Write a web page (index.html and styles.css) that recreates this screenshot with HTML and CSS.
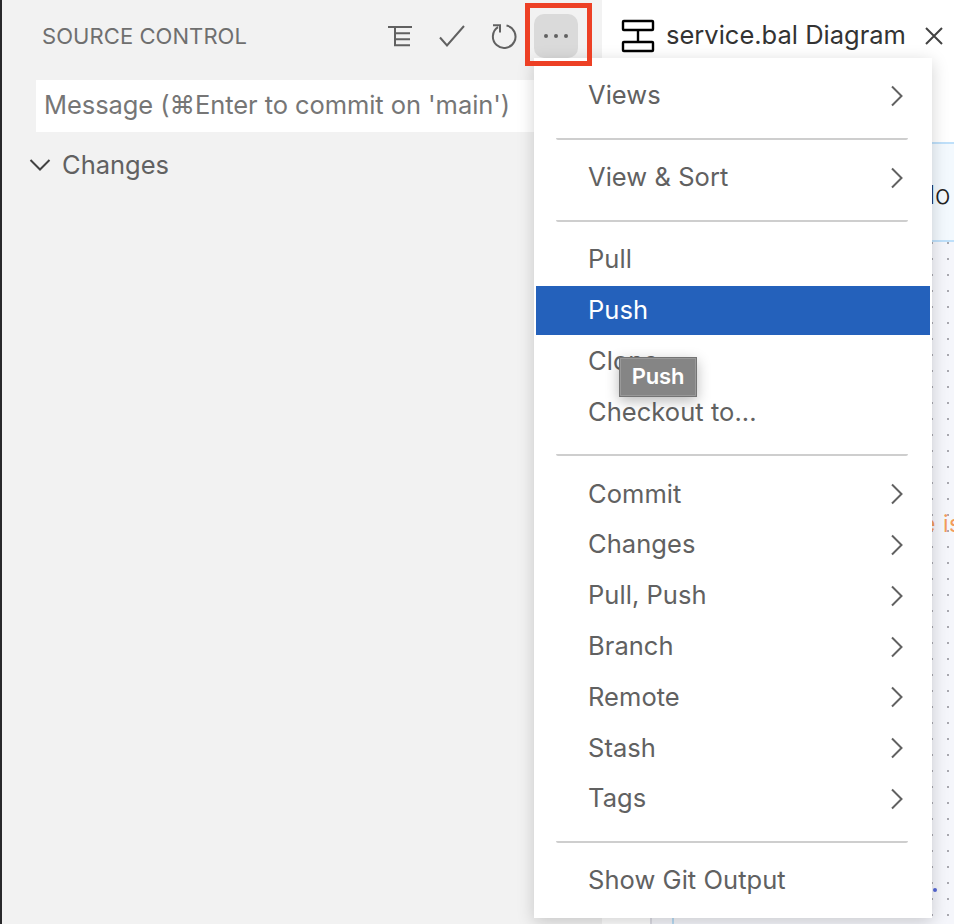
FILE: index.html
```html
<!DOCTYPE html>
<html lang="en">
<head>
<meta charset="utf-8">
<title>Source Control</title>
<link rel="stylesheet" href="styles.css">
</head>
<body>
<div class="window">
  <aside class="sidebar">
    <header class="side-head">
      <h1 class="side-title">SOURCE CONTROL</h1>
      <div class="actions">
        <svg class="act-tree" width="26" height="24" viewBox="0 0 26 24"><path d="M0 3H24M7 3V21.2H22M7 9.2H22M7 15.2H22"/></svg>
        <svg class="act-check" width="26" height="24" viewBox="0 0 26 24"><path d="M1 13.5L8 21.5L25 2"/></svg>
        <svg class="act-refresh" width="28" height="26" viewBox="0 0 28 26"><path d="M16.5 2.6A11.3 11.3 0 1 1 8 4.2M3 2.2H10V9.5"/></svg>
        <button class="more"><i></i><i></i><i></i></button>
      </div>
    </header>
    <div class="message">Message (⌘Enter to commit on 'main')</div>
    <div class="changes"><svg width="22" height="14" viewBox="0 0 22 14"><path d="M1.5 2L11 11.5L20.5 2"/></svg><span>Changes</span></div>
  </aside>
  <main class="editor">
    <div class="tab">
      <svg class="tab-icon" width="34" height="34" viewBox="0 0 34 34"><rect x="2" y="2" width="30" height="9" rx=".8"/><rect x="2" y="23" width="30" height="9" rx=".8"/><path d="M17 11V23"/></svg>
      <span class="tab-name">service.bal Diagram</span>
      <svg class="close" width="18" height="18" viewBox="0 0 18 18"><path d="M1 1L17 17M17 1L1 17"/></svg>
    </div>
    <div class="diagram">
      <div class="canvas">
        <div class="node">lo</div>
        <span class="note">e is</span>
        <span class="period"></span>
      </div>
    </div>
  </main>
</div>
<div class="highlight"></div>
<nav class="menu">
  <div class="item"><span>Views</span><svg class="chev" viewBox="0 0 14 22"><path d="M2 1.5L11.5 11L2 20.5"/></svg></div>
  <hr>
  <div class="item"><span>View &amp; Sort</span><svg class="chev" viewBox="0 0 14 22"><path d="M2 1.5L11.5 11L2 20.5"/></svg></div>
  <hr>
  <div class="item"><span>Pull</span></div>
  <div class="item active"><span>Push</span></div>
  <div class="item"><span>Clone</span></div>
  <div class="item"><span>Checkout to...</span></div>
  <hr>
  <div class="item"><span>Commit</span><svg class="chev" viewBox="0 0 14 22"><path d="M2 1.5L11.5 11L2 20.5"/></svg></div>
  <div class="item"><span>Changes</span><svg class="chev" viewBox="0 0 14 22"><path d="M2 1.5L11.5 11L2 20.5"/></svg></div>
  <div class="item"><span>Pull, Push</span><svg class="chev" viewBox="0 0 14 22"><path d="M2 1.5L11.5 11L2 20.5"/></svg></div>
  <div class="item"><span>Branch</span><svg class="chev" viewBox="0 0 14 22"><path d="M2 1.5L11.5 11L2 20.5"/></svg></div>
  <div class="item"><span>Remote</span><svg class="chev" viewBox="0 0 14 22"><path d="M2 1.5L11.5 11L2 20.5"/></svg></div>
  <div class="item"><span>Stash</span><svg class="chev" viewBox="0 0 14 22"><path d="M2 1.5L11.5 11L2 20.5"/></svg></div>
  <div class="item"><span>Tags</span><svg class="chev" viewBox="0 0 14 22"><path d="M2 1.5L11.5 11L2 20.5"/></svg></div>
  <hr>
  <div class="item"><span>Show Git Output</span></div>
</nav>
<div class="tooltip">Push</div>
</body>
</html>
```
FILE: styles.css
```css
* { box-sizing: border-box; }
body { margin: 0; width: 954px; height: 924px; overflow: hidden; position: relative; font-family: Inter, "Noto Sans", "DejaVu Sans", sans-serif; font-size: 25.5px; color: #616161; }
svg { fill: none; stroke: #616161; stroke-width: 2; flex: none; display: block; }
.window { display: flex; height: 924px; }
.sidebar { width: 602px; background: #f2f2f2; border-left: 2px solid #29292b; }
.side-head { height: 80px; padding: 0 24px 8px 40px; display: flex; align-items: center; justify-content: space-between; }
.side-title { margin: 0; font-size: 22px; font-weight: 400; letter-spacing: .07px; color: #6f6f6f; white-space: nowrap; }
.actions { display: flex; align-items: center; }
.act-check { margin-left: 25px; }
.act-refresh { margin-left: 25px; }
.more { width: 44px; height: 44px; border: 0; padding: 0; border-radius: 10px; background: #dadada; margin-left: 16px; display: flex; align-items: center; justify-content: center; gap: 6px; }
.more i { width: 4px; height: 4px; border-radius: 50%; background: #616161; }
.message { margin-left: 34px; height: 52px; padding-left: 8px; line-height: 50px; background: #fff; color: #767676; white-space: nowrap; letter-spacing: -.07px; }
.changes { display: flex; align-items: center; height: 66px; padding-left: 27px; gap: 11px; }
.changes span { margin-top: -2px; }
.changes svg { stroke: #424242; }
.editor { flex: 1; min-width: 0; background: #fff; }
.tab { height: 72px; padding-left: 19px; display: flex; align-items: center; }
.tab-icon { stroke: #000; stroke-width: 2.4; }
.tab-name { margin: -3px 0 0 11px; color: #333; white-space: nowrap; }
.close { margin-left: 19px; stroke: #424242; }
.diagram { height: 852px; padding-left: 48px; overflow: hidden; }
.canvas { position: relative; height: 852px; border-left: 2px solid #dcdce4; background: #f5f6fb radial-gradient(circle, #a9a9b0 1px, transparent 1.5px) 0 3px / 16px 16px; }
.canvas::before { content: ""; display: block; height: 70px; background: #fff; }
.canvas::after { content: ""; position: absolute; left: 20px; top: 170px; bottom: 0; border-left: 2px solid #b9dcf5; }
.node { height: 100px; border: solid #bfe0fa; border-width: 2px 0; background: #f3f9fe; padding-left: 277px; line-height: 101px; color: #222; font-size: 26px; font-weight: 300; white-space: nowrap; }
.note { position: absolute; left: 270px; top: 436px; color: #f39c5a; font-size: 23px; letter-spacing: .5px; line-height: 32px; white-space: nowrap; }
.period { position: absolute; left: 281px; top: 816px; width: 4px; height: 4px; border-radius: 50%; background: #5567d5; }
.highlight { position: absolute; left: 525px; top: 3px; width: 67px; height: 63px; border: 5px solid #ed4025; z-index: 2; }
.menu { position: absolute; left: 534px; top: 58px; width: 398px; height: 860px; padding: 12.4px 2px 0; background: #fff; box-shadow: 0 4px 16px rgba(0,0,0,.18); }
.item { height: 50.8px; border: solid transparent; border-width: 1.4px 0; background-clip: padding-box; padding: 0 26px 0 52px; display: flex; align-items: center; justify-content: space-between; white-space: nowrap; letter-spacing: .05px; }
.item span { position: relative; top: -1px; }
.item.active { color: #fff; background-color: #2461bb; }
.chev { width: 14px; height: 22px; }
.menu hr { width: 352px; height: 2px; border: 0; border-radius: 0 0 2px 2px; background: #cecece; margin: 16.8px auto 12.4px 20px; }
.tooltip { position: absolute; left: 619px; top: 357px; width: 78px; height: 40px; border: 1px solid #747474; background: #858585; box-shadow: inset 0 0 0 1px #999, 0 4px 14px rgba(0,0,0,.28); color: #fff; font-size: 22px; font-weight: 600; line-height: 37px; text-align: center; letter-spacing: -.2px; }
```
